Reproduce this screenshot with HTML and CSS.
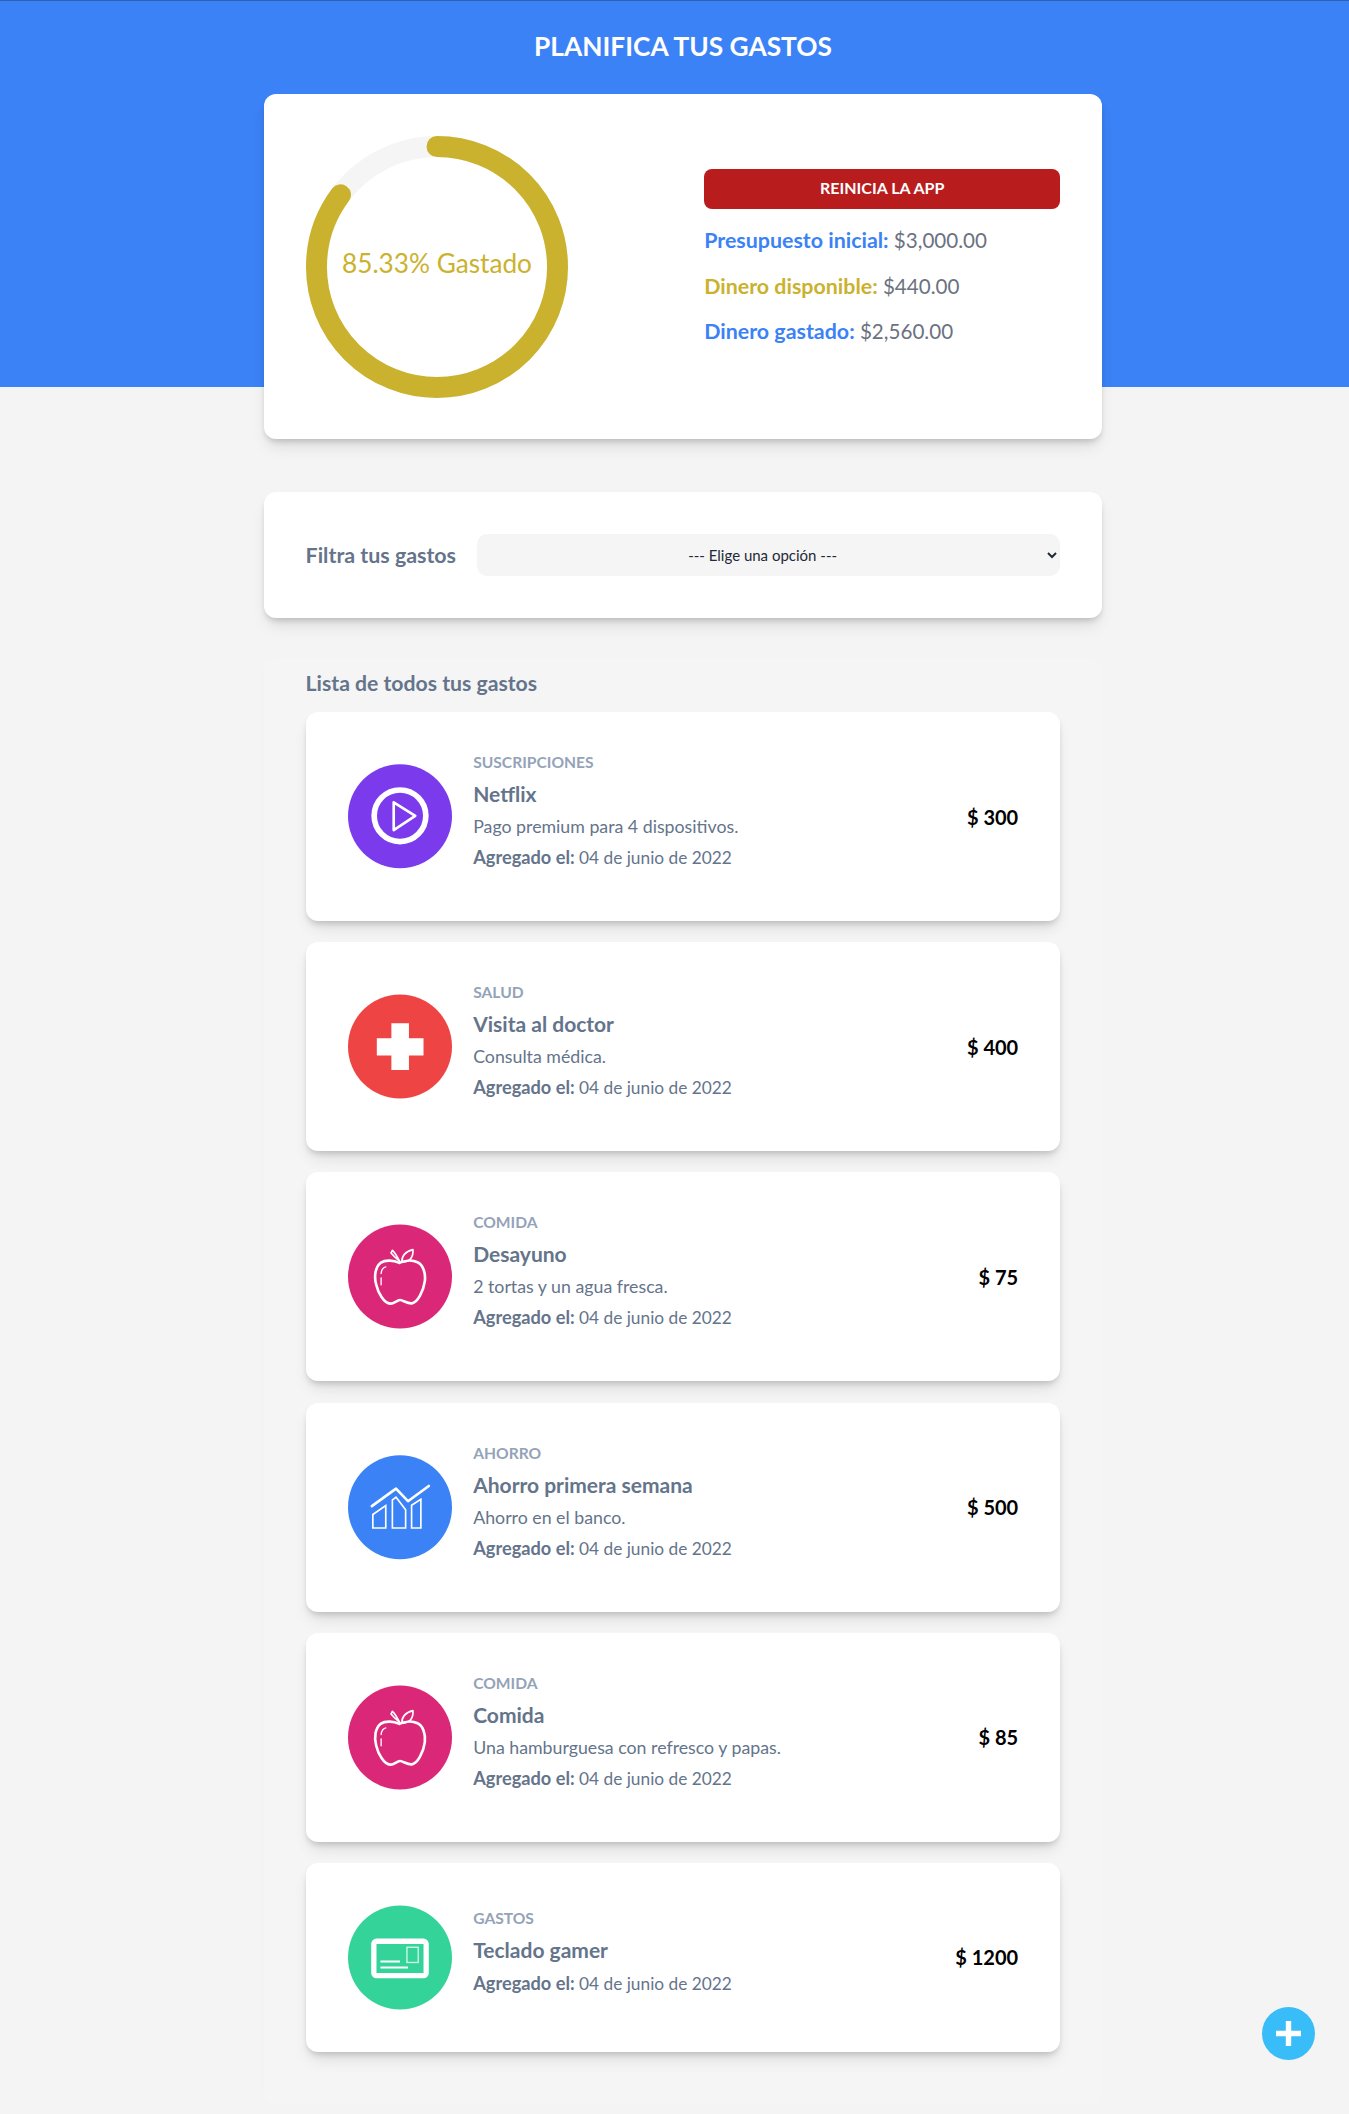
FILE: index.html
```html
<!DOCTYPE html>
<html lang="es">
<head>
<meta charset="utf-8">
<title>Planifica tus gastos</title>
<link rel="stylesheet" href="styles.css">
</head>
<body>
<header class="hero"><h1>PLANIFICA TUS GASTOS</h1></header>
<main class="page">
  <section class="panel summary">
    <svg class="ring" viewBox="0 0 100 100">
      <circle class="ring-trail" cx="50" cy="50" r="46"></circle>
      <circle class="ring-path" cx="50" cy="50" r="46" pathLength="100" stroke-dasharray="85.33 100" transform="rotate(-90 50 50)"></circle>
      <text class="ring-text" x="50" y="48.6">85.33% Gastado</text>
    </svg>
    <div class="totals">
      <button class="reset" type="button">REINICIA LA APP</button>
      <p><b class="blue">Presupuesto inicial:</b> $3,000.00</p>
      <p><b class="gold">Dinero disponible:</b> $440.00</p>
      <p><b class="blue">Dinero gastado:</b> $2,560.00</p>
    </div>
  </section>

  <section class="panel filter">
    <label class="filter-label" for="f">Filtra tus gastos</label>
    <select id="f" class="filter-select"><option>--- Elige una opción ---</option></select>
  </section>

  <section class="list">
    <h2>Lista de todos tus gastos</h2>

    <article class="expense">
      <div class="expense-main">
        <svg class="icon" viewBox="52 44 314 314">
          <circle cx="209" cy="200" r="157" fill="#7c3aed"></circle>
          <circle cx="209" cy="199" r="78" class="s" stroke-width="17"></circle>
          <path d="M190 158L255 199L190 242Z" class="s" stroke-width="8" stroke-linejoin="round"></path>
        </svg>
        <div class="info">
          <p class="cat">SUSCRIPCIONES</p>
          <h3>Netflix</h3>
          <p class="desc">Pago premium para 4 dispositivos.</p>
          <p class="date"><b>Agregado el:</b> 04 de junio de 2022</p>
        </div>
      </div>
      <p class="amount">$ 300</p>
    </article>

    <article class="expense">
      <div class="expense-main">
        <svg class="icon" viewBox="52 44 314 314">
          <circle cx="209" cy="201" r="157" fill="#ef4444"></circle>
          <path d="M183 131H236V176H280V228H236V272H183V228H139V176H183Z" fill="#fff"></path>
        </svg>
        <div class="info">
          <p class="cat">SALUD</p>
          <h3>Visita al doctor</h3>
          <p class="desc">Consulta médica.</p>
          <p class="date"><b>Agregado el:</b> 04 de junio de 2022</p>
        </div>
      </div>
      <p class="amount">$ 400</p>
    </article>

    <article class="expense">
      <div class="expense-main">
        <svg class="icon" viewBox="52 44 314 314">
          <circle cx="209" cy="201" r="157" fill="#db2777"></circle>
          <path d="M207 160C190 152 165 150 150 160C135 172 130 200 137 225C143 250 160 282 180 283C190 284 200 272 209 272C218 272 232 284 245 282C262 280 280 245 284 215C287 190 278 165 262 158C245 150 222 153 207 160Z" class="s" stroke-width="8"></path>
          <path d="M166 172C158 174 153 182 152 192M152 205V226" class="s" stroke-width="4" stroke-linecap="round"></path>
          <path d="M215 158C213 140 225 125 248 120C250 140 240 158 215 158ZM208 155C200 140 195 130 186 122L182 130C190 140 200 148 208 155Z" class="s" stroke-width="5" stroke-linejoin="round"></path>
        </svg>
        <div class="info">
          <p class="cat">COMIDA</p>
          <h3>Desayuno</h3>
          <p class="desc">2 tortas y un agua fresca.</p>
          <p class="date"><b>Agregado el:</b> 04 de junio de 2022</p>
        </div>
      </div>
      <p class="amount">$ 75</p>
    </article>

    <article class="expense">
      <div class="expense-main">
        <svg class="icon" viewBox="52 44 314 314">
          <circle cx="209" cy="200" r="157" fill="#3b82f6"></circle>
          <path d="M124 197L197 144L233 182L296 136" class="s" stroke-width="8" stroke-linecap="round" stroke-linejoin="round"></path>
          <path d="M127 222L166 195V263H127ZM186 178L197 170L226 208V263H186ZM244 194L272 176V263H244Z" class="s" stroke-width="5"></path>
        </svg>
        <div class="info">
          <p class="cat">AHORRO</p>
          <h3>Ahorro primera semana</h3>
          <p class="desc">Ahorro en el banco.</p>
          <p class="date"><b>Agregado el:</b> 04 de junio de 2022</p>
        </div>
      </div>
      <p class="amount">$ 500</p>
    </article>

    <article class="expense">
      <div class="expense-main">
        <svg class="icon" viewBox="52 44 314 314">
          <circle cx="209" cy="201" r="157" fill="#db2777"></circle>
          <path d="M207 160C190 152 165 150 150 160C135 172 130 200 137 225C143 250 160 282 180 283C190 284 200 272 209 272C218 272 232 284 245 282C262 280 280 245 284 215C287 190 278 165 262 158C245 150 222 153 207 160Z" class="s" stroke-width="8"></path>
          <path d="M166 172C158 174 153 182 152 192M152 205V226" class="s" stroke-width="4" stroke-linecap="round"></path>
          <path d="M215 158C213 140 225 125 248 120C250 140 240 158 215 158ZM208 155C200 140 195 130 186 122L182 130C190 140 200 148 208 155Z" class="s" stroke-width="5" stroke-linejoin="round"></path>
        </svg>
        <div class="info">
          <p class="cat">COMIDA</p>
          <h3>Comida</h3>
          <p class="desc">Una hamburguesa con refresco y papas.</p>
          <p class="date"><b>Agregado el:</b> 04 de junio de 2022</p>
        </div>
      </div>
      <p class="amount">$ 85</p>
    </article>

    <article class="expense">
      <div class="expense-main">
        <svg class="icon" viewBox="52 44 314 314">
          <circle cx="209" cy="201" r="157" fill="#34d399"></circle>
          <rect x="130" y="152" width="158" height="104" rx="8" class="s" stroke-width="16"></rect>
          <rect x="230" y="170" width="34" height="46" class="s" stroke-width="4" opacity=".8"></rect>
          <path d="M150 213H209M150 231H233" class="s" stroke-width="6"></path>
        </svg>
        <div class="info">
          <p class="cat">GASTOS</p>
          <h3>Teclado gamer</h3>
          <p class="date"><b>Agregado el:</b> 04 de junio de 2022</p>
        </div>
      </div>
      <p class="amount">$ 1200</p>
    </article>
  </section>
</main>
<button class="fab" type="button" aria-label="Agregar gasto">
  <svg viewBox="0 0 53 53"><path d="M26.5 14V39M14 26.5H39" stroke="#fff" stroke-width="5.4" fill="none"></path></svg>
</button>
</body>
</html>
```

FILE: styles.css
```css
* { box-sizing: border-box; }
html, body { margin: 0; }
body {
  position: relative;
  min-height: 2114px;
  background: #f4f4f4;
  font-family: Lato, "Open Sans", sans-serif;
  color: #64748b;
  overflow: hidden;
}
p, h1, h2, h3 { margin: 0; }

.hero {
  height: 387px;
  background: #3b82f6;
  border-top: 1px solid #2c5fb5;
  padding: 27px 0 0 17px;
  text-align: center;
}
.hero h1 {
  font-size: 26.3px;
  line-height: 36px;
  font-weight: 700;
  color: #fff;
}

.page {
  width: 838.6px;
  margin: -293px 0 0 263.6px;
}
.panel {
  background: #fff;
  border-radius: 12px;
  padding: 42px;
  box-shadow: 0 10px 15px -3px rgba(0,0,0,.1), 0 4px 6px -2px rgba(0,0,0,.18);
}

.summary {
  display: grid;
  grid-template-columns: 356px 356px;
  column-gap: 42.6px;
  align-items: center;
}
.ring { width: 262px; height: 262px; display: block; margin-bottom: -1px; }
.ring-trail { fill: none; stroke: #f5f5f5; stroke-width: 8; }
.ring-path { fill: none; stroke: #cab22e; stroke-width: 8; stroke-linecap: round; }
.ring-text {
  fill: #cab22e;
  font-size: 10px;
  text-anchor: middle;
  dominant-baseline: central;
}

.totals { font-size: 20.6px; line-height: 28px; color: #6b7280; padding-bottom: 19px; }
.totals p { margin-top: 17.5px; }
.totals b { font-size: 21.4px; font-weight: 700; }
.blue { color: #3b82f6; }
.gold { color: #cab22e; }
.reset {
  display: block;
  width: 100%;
  height: 40px;
  padding: 0 0 2px;
  border: 0;
  border-radius: 8px;
  background: #b91c1c;
  color: #fff;
  font: 700 16px Lato, sans-serif;
}

.filter {
  margin-top: 53px;
  display: flex;
  align-items: center;
  gap: 21px;
}
.filter-label { font-size: 21.4px; font-weight: 700; white-space: nowrap; }
.filter-select {
  flex: 1;
  height: 42px;
  border: 0;
  border-radius: 10px;
  background-color: #f5f5f5;
  color: #1f2937;
  font: 15px Lato, sans-serif;
  text-align: center;
}

.list {
  margin-top: 40px;
  padding: 11px 42px 0;
  height: 1447px;
  background: #f5f5f5;
  border-radius: 12px;
  box-shadow: 0 0 3px rgba(0,0,0,.012);
}
.list h2 { font-size: 21.2px; line-height: 28px; font-weight: 700; margin-bottom: 15px; }

.expense {
  display: flex;
  align-items: center;
  justify-content: space-between;
  min-height: 209px;
  padding: 42px;
  margin-bottom: 21.2px;
  background: #fff;
  border-radius: 12px;
  box-shadow: 0 10px 15px -3px rgba(0,0,0,.1), 0 4px 6px -2px rgba(0,0,0,.18);
}
.expense:last-child { min-height: 189px; margin-bottom: 0; }
.expense-main { display: flex; align-items: center; gap: 21.6px; }
.icon { width: 104px; height: 105px; flex: none; display: block; }
.s { fill: none; stroke: #fff; }
.info { margin-top: -11px; }
.cat { font-size: 15.6px; line-height: 24px; font-weight: 700; color: #94a3b8; }
.info h3 { font-size: 21px; line-height: 32px; font-weight: 700; margin: 4px 0 2px; }
.desc { font-size: 17.75px; line-height: 28px; }
.date { font-size: 17.3px; line-height: 28px; margin-top: 3px; }
.date b { font-size: 18.2px; font-weight: 700; }
.amount { font-size: 20px; line-height: 28px; font-weight: 700; color: #000; }

.fab {
  position: absolute;
  left: 1261.5px;
  top: 2006.5px;
  width: 53px;
  height: 53px;
  padding: 0;
  border: 0;
  border-radius: 50%;
  background: #38bdf8;
}
.fab svg { display: block; width: 53px; height: 53px; }
```
